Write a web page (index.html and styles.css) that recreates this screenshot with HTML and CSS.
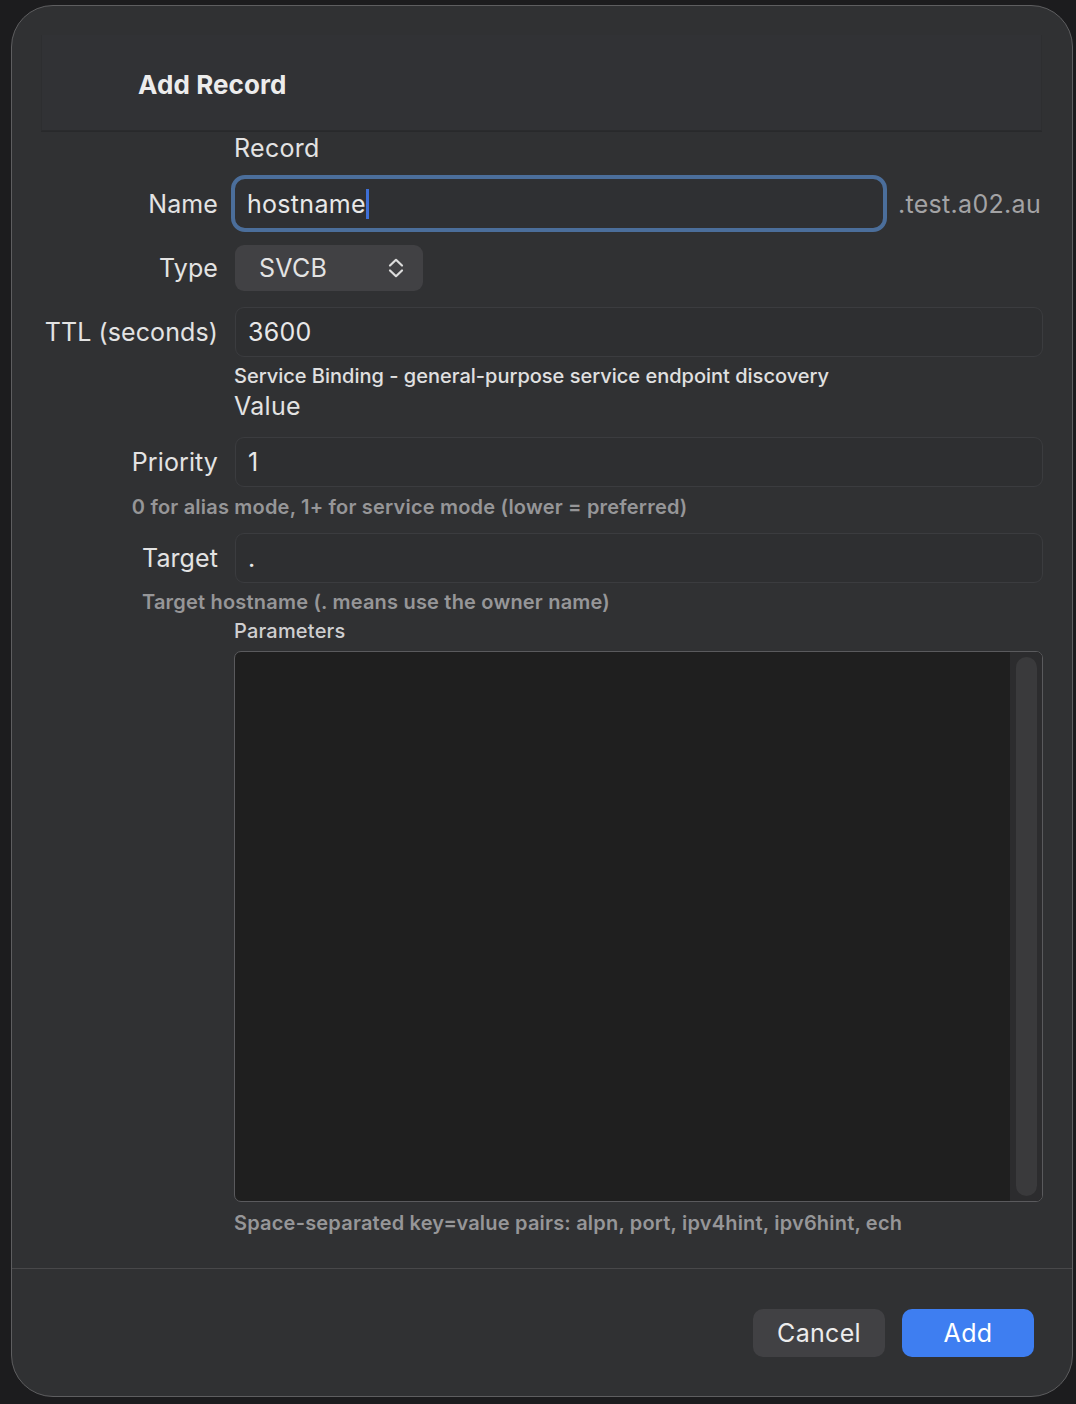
FILE: index.html
```html
<!DOCTYPE html>
<html>
<head>
<meta charset="utf-8">
<link rel="stylesheet" href="styles.css">
</head>
<body>
<div class="dialog">
  <div class="header"><h1 class="title">Add Record</h1></div>
  <div class="form">
    <div class="section-title">Record</div>
    <div class="row row-name">
      <label class="label">Name</label>
      <div class="field-wrap">
        <div class="input focused"><span>hostname</span><span class="caret"></span></div>
        <span class="suffix">.test.a02.au</span>
      </div>
    </div>
    <div class="row row-type">
      <label class="label">Type</label>
      <div class="field-wrap">
        <div class="popup">
          <span>SVCB</span>
          <svg class="chev" width="16" height="24" viewBox="0 0 16 24"><path d="M2 9.5 L8 3.8 L14 9.5 M2 14.5 L8 20.2 L14 14.5" fill="none" stroke="#dcdcdc" stroke-width="2.2" stroke-linecap="round" stroke-linejoin="round"/></svg>
        </div>
      </div>
    </div>
    <div class="row row-ttl">
      <label class="label">TTL (seconds)</label>
      <div class="field-wrap"><div class="input">3600</div></div>
    </div>
    <div class="desc">Service Binding - general-purpose service endpoint discovery</div>
    <div class="section-title value-title">Value</div>
    <div class="group group-priority">
      <div class="row">
        <label class="label">Priority</label>
        <div class="field-wrap"><div class="input">1</div></div>
      </div>
      <div class="hint">0 for alias mode, 1+ for service mode (lower = preferred)</div>
    </div>
    <div class="group group-target">
      <div class="row">
        <label class="label">Target</label>
        <div class="field-wrap"><div class="input">.</div></div>
      </div>
      <div class="hint">Target hostname (. means use the owner name)</div>
    </div>
    <div class="params-label">Parameters</div>
    <div class="textarea">
      <div class="scroll-track"><div class="scroll-thumb"></div></div>
    </div>
    <div class="hint params-hint">Space-separated key=value pairs: alpn, port, ipv4hint, ipv6hint, ech</div>
  </div>
  <div class="footer">
    <button class="btn btn-cancel">Cancel</button>
    <button class="btn btn-add">Add</button>
  </div>
</div>
</body>
</html>
```
FILE: styles.css
```css
* { box-sizing: border-box; }
html, body { margin: 0; padding: 0; }
body {
  background: #1c1c1e;
  width: 1076px;
  height: 1404px;
  overflow: hidden;
  font-family: Inter, "Noto Sans", sans-serif;
  color: #e3e3e3;
}
.dialog {
  margin: 5px 0 0 11px;
  width: 1062px;
  height: 1392px;
  border: 1.5px solid #5e5e60;
  border-radius: 42px;
  background: #303133;
  display: flex;
  flex-direction: column;
  overflow: hidden;
}
.header {
  margin: 29px 30px 0 29px;
  height: 96px;
  background: #313235;
  border: 1px solid #2d2e30;
  border-top: none;
  border-bottom-color: #2a2b2d;
  box-shadow: 0 1px 0 rgba(0,0,0,0.15);
  display: flex;
  align-items: center;
  padding-left: 96px;
}
.title {
  margin: 0;
  font-size: 26px;
  font-weight: 700;
  letter-spacing: 0.1px;
  color: #ececec;
  position: relative;
  top: 2px;
}
.form {
  display: flex;
  flex-direction: column;
  padding: 0 29px 0 29px;
}
.section-title {
  margin: 2px 0 0 193px;
  height: 30px;
  line-height: 30px;
  font-size: 25px;
  letter-spacing: 0.3px;
  color: #e3e3e3;
}
.row {
  display: flex;
  align-items: center;
  align-self: flex-end;
  gap: 17px;
}
.label {
  font-size: 25px;
  letter-spacing: 0.1px;
  color: #e3e3e3;
  text-align: right;
  white-space: nowrap;
}
.field-wrap {
  width: 808px;
  display: flex;
  align-items: center;
}
.input {
  height: 50px;
  flex: 1;
  border: 1px solid #3b3c3f;
  border-radius: 9px;
  background: #2e2f31;
  padding-left: 12px;
  display: flex;
  align-items: center;
  font-size: 25px;
  letter-spacing: 0.3px;
  color: #e8e8e8;
}
.row-name { margin-top: 16px; }
.row-name .input {
  flex: 0 0 648px;
  height: 49px;
  border: none;
  outline: 4px solid #4b6e9b;
  outline-offset: 0;
  border-radius: 10px;
  background: #2f3033;
}
.caret {
  display: inline-block;
  width: 3px;
  height: 30px;
  background: #3e6fd6;
}
.suffix {
  margin-left: 15px;
  font-size: 25px;
  letter-spacing: 0.3px;
  color: #a3a3a5;
}
.row-type { margin-top: 17px; }
.popup {
  width: 188px;
  height: 46px;
  background: #414144;
  border-radius: 9px;
  display: flex;
  align-items: center;
  justify-content: space-between;
  padding: 0 19px 0 24px;
  font-size: 25px;
  letter-spacing: 0.3px;
  color: #e3e3e3;
}
.row-ttl { margin-top: 16px; }
.desc {
  margin: 7px 0 0 193px;
  height: 24px;
  line-height: 24px;
  font-size: 20px;
  font-weight: 500;
  color: #e0e0e0;
}
.value-title { margin-top: 3px; }
.group {
  display: flex;
  flex-direction: column;
  align-self: flex-end;
}
.group-priority { margin-top: 16px; }
.group-target { margin-top: 14px; }
.hint {
  margin-top: 8px;
  height: 24px;
  line-height: 24px;
  font-size: 20px;
  font-weight: 600;
  letter-spacing: 0.2px;
  color: #969698;
}
.group-target .hint { margin-top: 7px; }
.params-label {
  margin: 5px 0 0 193px;
  height: 24px;
  line-height: 24px;
  font-size: 20px;
  font-weight: 500;
  letter-spacing: 0.2px;
  color: #cfcfd1;
}
.textarea {
  margin: 8px 0 0 193px;
  height: 551px;
  border: 1.5px solid #5a5a5d;
  border-radius: 7px;
  background: #1f1f1f;
  display: flex;
  justify-content: flex-end;
  overflow: hidden;
}
.scroll-track {
  width: 32px;
  background: #2c2c2e;
  padding: 5px 5px 5px 6px;
}
.scroll-thumb {
  height: 100%;
  background: #3a3a3c;
  border-radius: 11px;
}
.params-hint { margin: 9px 0 0 193px; }
.footer {
  margin-top: 33px;
  border-top: 1.5px solid #48484a;
  flex: 1;
  display: flex;
  justify-content: flex-end;
  align-items: flex-start;
  padding: 40px 38px 0 0;
  gap: 17px;
}
.btn {
  width: 132px;
  height: 48px;
  border: none;
  border-radius: 10px;
  font-family: Inter, "Noto Sans", sans-serif;
  font-size: 25px;
  letter-spacing: 0.3px;
  color: #ececec;
}
.btn-cancel { background: #414144; }
.btn-add { background: #3e7ef1; color: #ffffff; }
```
